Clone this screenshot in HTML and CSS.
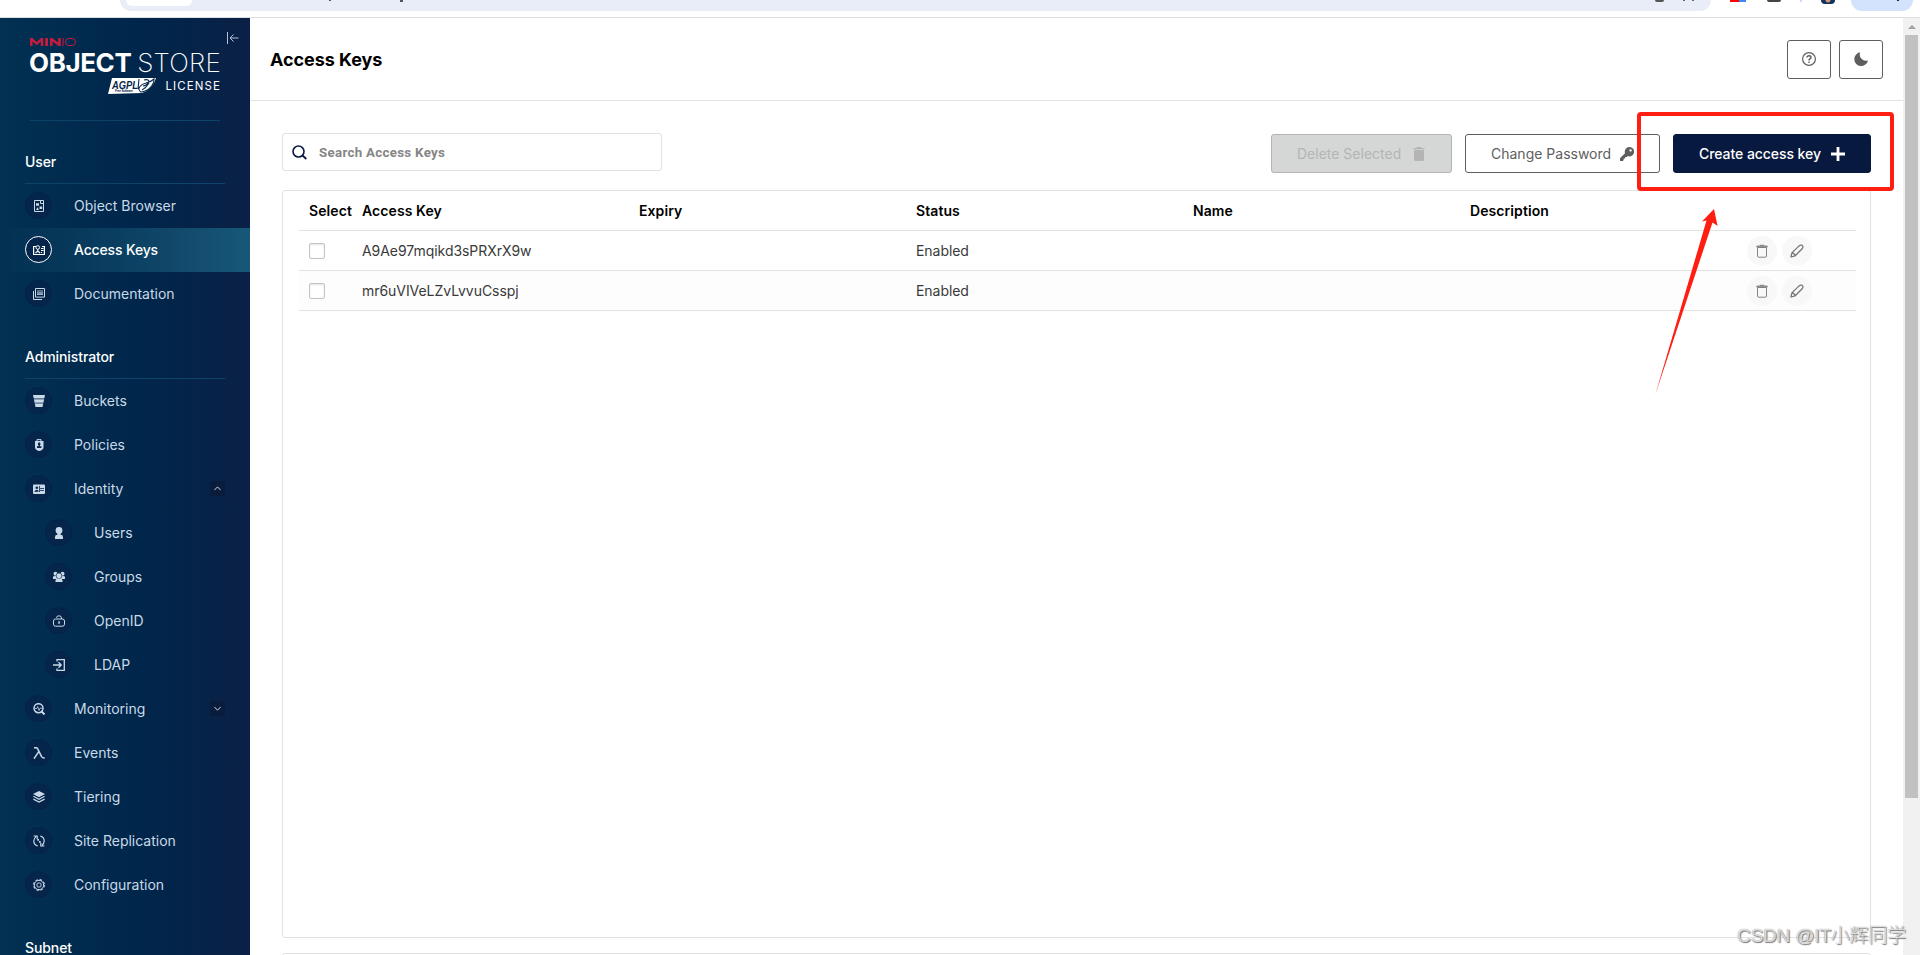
FILE: index.html
```html
<!DOCTYPE html>
<html lang="en">
<head>
    <meta charset="UTF-8">
    <meta name="viewport" content="width=device-width, initial-scale=1.0">
    <title>Access Keys</title>
    <link rel="stylesheet" href="styles.css">
</head>
<body>
    <!-- icons -->
    <svg class="defs" width="0" height="0">
        <symbol id="trash" viewBox="0 0 14 14"><path d="M2.500 3.500h9v8.600q0 1.100-1.100 1.100H3.600q-1.100 0-1.100-1.100zM1.500 2.800q0-.8.8-.8h9.400q.8 0 .8.8zM5 1.300h4" fill="none" stroke="currentColor" stroke-width=".9"/></symbol>
        <symbol id="pencil" viewBox="0 0 14 14"><path d="M1 13l.9-4.100 6.900-6.800q1.700-1.400 3.200-.9 1.600 1.200.4 3.300l-7.200 7.300zM1.900 8.900q2.500.2 3.300 2.900" fill="none" stroke="currentColor" stroke-width="1.300" stroke-linejoin="round"/></symbol>
    </svg>

    <div class="browser-bar">
        <div class="address">
            <div class="chip"></div>
            <i class="mark m1"></i><i class="mark m2"></i><i class="mark m3"></i><i class="mark m4"></i>
        </div>
        <div class="extensions">
            <i class="ext-red"></i><i class="ext-dark"></i><i class="ext-line"></i><i class="avatar"></i>
            <div class="update"><i></i></div>
        </div>
    </div>

    <div class="app">
        <aside class="sidebar">
            <div class="brand">
                <div class="logo">
                    <svg class="minio" width="46" height="8" viewBox="0 0 46 8"><path d="M0 8V0h2.500l4.200 4L11 0h2.300v8h-2.500V3.500L6.700 7.300 2.500 3.500V8zM15.200 0h2.800v8h-2.800zM20 8V0h2.200l6 4.600V0h2.600v8h-2.200l-6-4.600V8zM32.600 0h1v8h-1z" fill="#c51b3f"/><rect x="35.500" y=".5" width="10" height="7" rx="3.500" fill="none" stroke="#c51b3f"/></svg>
                    <div class="product"><b>OBJECT</b><span>STORE</span></div>
                    <div class="license">
                        <svg width="49" height="16" viewBox="0 0 49 16">
                            <path d="M4 0H48Q45 11 34 15L0 16z" fill="#fff"/>
                            <text class="agpl" x="4" y="10.500" textLength="26" lengthAdjust="spacingAndGlyphs">AGPL</text>
                            <text class="agpl-sub" x="7" y="14.300" textLength="18">Free Software</text>
                            <path d="M31 1L30 11M33 14C28 11 33 6 38 5 42 4 45 2 46 1 46 7 41 13 33 14zM34 12Q38 10 41 5M36 2Q40 1 41 3 39 8 35 8" fill="none" stroke="#05264a" stroke-width="1.100"/>
                        </svg>
                        <span>LICENSE</span>
                    </div>
                </div>
                <svg class="collapse" width="12" height="12" viewBox="0 0 12 12"><path d="M.5 0v12M11.500 6H3M6.500 2.500L3 6l3.500 3.500" fill="none" stroke="#b5c4d4"/></svg>
            </div>

            <h2>User</h2>
            <a class="item"><span class="dot"><svg viewBox="0 0 12 12"><path d="M1.500.5h9v11h-9zM7.500.5v3h3" fill="none" stroke="currentColor"/><path d="M3 3.200h3v2.500H3zM6.500 6.500h2.700v2.500H6.500zM3 10l1.500-2.700L6 10z" fill="currentColor"/></svg></span>Object Browser</a>
            <a class="item active"><span class="dot"><svg viewBox="0 0 12 12"><path d="M3 2.500H.6v8h10.800v-8H9" fill="none" stroke="currentColor" stroke-width="1.200"/><circle cx="4.800" cy="3.500" r="1.800" fill="none" stroke="currentColor"/><path d="M4.800 5.500v2M2.500 9l2.300-2L7 9M8 4.500h2.500M8 6.500h2.500M8 8.500h1" fill="none" stroke="currentColor" stroke-width="1.200"/></svg></span>Access Keys</a>
            <a class="item"><span class="dot"><svg viewBox="0 0 12 12"><path d="M2.500.5h9v8.600h-9zM.5 3v8.500H9" fill="none" stroke="currentColor"/><path d="M4 3h6M4 6.500h6" stroke="currentColor" stroke-width=".8"/><path d="M4 4h6v2H4z" fill="currentColor" opacity=".6"/></svg></span>Documentation</a>

            <h2>Administrator</h2>
            <a class="item"><span class="dot"><svg viewBox="0 0 12 12"><path d="M0 0h12l-.7 3.300H.7zM1.100 4.500h9.800l-.5 3H1.600zM1.900 8.800h8.200L9.500 12h-7z" fill="currentColor"/><path d="M.7 3.300h10.600l-1 6H1.700z" fill="currentColor" opacity=".4"/></svg></span>Buckets</a>
            <a class="item"><span class="dot"><svg viewBox="0 0 12 12"><path d="M4 2.500V.6h4v1.900" fill="none" stroke="currentColor"/><path d="M2 2h8.500v6q0 3-4.300 4Q2 11 2 8z" fill="currentColor"/><circle cx="6.200" cy="5" r="1.300" fill="#06254a"/><path d="M4 9V7.300h4.400V9zM5.500 3.500h1.400V8H5.500z" fill="#06254a"/></svg></span>Policies</a>
            <a class="item"><span class="dot"><svg viewBox="0 0 12 12"><rect y="1.500" width="12" height="9.500" rx="1" fill="currentColor"/><path d="M7 5.500h4M7 7.500h4M6.500 3v6M1.500 8.500h4" stroke="#06254a" stroke-width=".8"/><circle cx="3.800" cy="4.700" r="1.300" fill="#06254a"/><path d="M2 8q1.800-2.500 3.600 0z" fill="#06254a"/></svg></span>Identity<span class="toggle"><svg viewBox="0 0 7 5"><path d="M.3 4.200l3.200-3.300 3.200 3.300" fill="none" stroke="currentColor"/></svg></span></a>
            <a class="item sub"><span class="dot"><svg viewBox="0 0 12 12"><circle cx="6" cy="3.400" r="3.400" fill="currentColor"/><path d="M4.500 5h3v3h-3zM2 12v-2q0-2.300 2.300-2.300h3.400Q10 7.700 10 10v2z" fill="currentColor"/></svg></span>Users</a>
            <a class="item sub"><span class="dot"><svg viewBox="0 0 12 12"><g fill="currentColor"><circle cx="2.500" cy="2.800" r="2"/><circle cx="9.500" cy="2.800" r="2"/><path d="M0 8V6q0-1 2-1h8q2 0 2 1v2z"/><circle cx="6" cy="4.800" r="2.900" stroke="#06254a" stroke-width=".7"/><path d="M2.500 11V9.500q0-2 3.500-2t3.500 2V11z"/></g></svg></span>Groups</a>
            <a class="item sub"><span class="dot"><svg viewBox="0 0 12 12"><rect x=".5" y="4" width="11" height="7.200" rx="2" fill="none" stroke="currentColor"/><path d="M3.500 2.800Q3.600.8 6 .8t2.500 2V4" fill="none" stroke="currentColor"/><path d="M5.300 6.300h1.500v2.500H5.300z" fill="currentColor"/></svg></span>OpenID</a>
            <a class="item sub"><span class="dot"><svg viewBox="0 0 12 12"><path d="M4 2.500V.7h7.300v10.600H4V9.500M0 6h8M5.500 3.300L8.200 6 5.500 8.700" fill="none" stroke="currentColor" stroke-width="1.300"/></svg></span>LDAP</a>
            <a class="item"><span class="dot"><svg viewBox="0 0 12 12"><circle cx="5.500" cy="5.200" r="4.500" fill="none" stroke="currentColor" stroke-width="1.500"/><path d="M2 5.500h1.700l1-2 1.400 4 1-2.300H9" fill="none" stroke="currentColor" stroke-width=".8"/><path d="M8 8l3.500 3.500" stroke="currentColor" stroke-width="2"/></svg></span>Monitoring<span class="toggle"><svg viewBox="0 0 7 5"><path d="M.3.9l3.200 3.300L6.700.9" fill="none" stroke="currentColor"/></svg></span></a>
            <a class="item"><span class="dot"><svg viewBox="0 0 12 12"><path d="M1 .8h2.200q1 0 1.500 1l4 8q.7 1.500 3.100 1.300M5.600 4.800L1 11.700" fill="none" stroke="currentColor" stroke-width="1.500"/></svg></span>Events</a>
            <a class="item"><span class="dot"><svg viewBox="0 0 12 12"><path d="M6 0l6 3.100-6 3.100L0 3.100z" fill="currentColor"/><path d="M.4 5.300L6 8.200l5.600-2.900M.4 8.100L6 11l5.600-2.900" fill="none" stroke="currentColor" stroke-width="1.200"/></svg></span>Tiering</a>
            <a class="item"><span class="dot"><svg viewBox="0 0 12 12"><path d="M4.800 11Q.7 9.800.8 6 .9 3.400 3 1.600M.6 1h3.600v3.200M7.200 1Q11.300 2.200 11.200 6q-.1 2.600-2.200 4.400M11.400 11H7.800V7.800" fill="none" stroke="currentColor" stroke-width="1.200"/><path d="M4.300 4h1.700v1.700H4.300zM6 6h1.700v1.700H6z" fill="currentColor"/></svg></span>Site Replication</a>
            <a class="item"><span class="dot"><svg viewBox="0 0 12 12"><circle cx="6" cy="6" r="4.700" fill="none" stroke="currentColor"/><circle cx="6" cy="6" r="5.400" fill="none" stroke="currentColor" stroke-width="1.100" stroke-dasharray="2.400 1.840"/><rect x="4" y="4" width="4" height="4" rx="1" fill="none" stroke="currentColor" stroke-width=".9"/></svg></span>Configuration</a>

            <h2>Subnet</h2>
        </aside>

        <main>
            <header>
                <h1>Access Keys</h1>
                <div class="header-buttons">
                    <button><svg width="14" height="14" viewBox="0 0 14 14"><circle cx="7" cy="7" r="6.400" fill="none" stroke="currentColor" stroke-width="1.200"/><path d="M5 5.600Q5 3.700 7 3.700t2 1.700Q9 6.500 7.800 7 7 7.400 7 8.400M7 9.400v1.500" fill="none" stroke="currentColor" stroke-width="1.400"/></svg></button>
                    <button><svg width="14" height="14" viewBox="0 0 14 14"><path d="M6.200.3A6.900 6.900 0 1 0 14 8.400 6.200 6.200 0 0 1 6.200.3z" fill="currentColor"/></svg></button>
                </div>
            </header>

            <section class="content">
                <div class="toolbar">
                    <label class="search">
                        <svg width="15" height="15" viewBox="0 0 15 15"><circle cx="6.500" cy="6.500" r="5.500" fill="none" stroke="#0a1a3f" stroke-width="1.600"/><path d="M10.500 10.500l3.800 3.500" stroke="#0a1a3f" stroke-width="1.800"/></svg>
                        <input type="text" placeholder="Search Access Keys">
                    </label>
                    <div class="actions">
                        <button class="delete" disabled>Delete Selected <svg width="14" height="14" viewBox="0 0 14 14"><path d="M1.500 1h3l.5-1h4l.5 1h3v1.200h-11zM2 3h10v9.500q0 1.500-1.500 1.500h-7Q2 14 2 12.500z" fill="currentColor"/></svg></button>
                        <button class="password">Change Password <svg width="14" height="14" viewBox="0 0 14 14"><path d="M9.300 0a4.700 4.700 0 1 1-1.500 9.100L6.800 10H5.200v1.500H3.700V13l-.8 1H0v-2.800l5-5A4.700 4.700 0 0 1 9.300 0zm1.200 2.200a1.200 1.200 0 1 0 .1 0z" fill="currentColor" fill-rule="evenodd"/></svg></button>
                        <button class="create">Create access key <svg width="14" height="14" viewBox="0 0 14 14"><path d="M7 0v14M0 7h14" stroke="currentColor" stroke-width="2.800"/></svg></button>
                    </div>
                </div>

                <div class="table">
                    <div class="row head">
                        <span>Select</span><span>Access Key</span><span>Expiry</span><span>Status</span><span>Name</span><span>Description</span><span></span>
                    </div>
                    <div class="row">
                        <span><i class="check"></i></span><span>A9Ae97mqikd3sPRXrX9w</span><span></span><span>Enabled</span><span></span><span></span>
                        <span class="row-actions"><a><svg><use href="#trash"/></svg></a><a><svg><use href="#pencil"/></svg></a></span>
                    </div>
                    <div class="row even">
                        <span><i class="check"></i></span><span>mr6uVIVeLZvLvvuCsspj</span><span></span><span>Enabled</span><span></span><span></span>
                        <span class="row-actions"><a><svg><use href="#trash"/></svg></a><a><svg><use href="#pencil"/></svg></a></span>
                    </div>
                </div>
                <div class="help-box"></div>
            </section>
        </main>

        <div class="scrollbar"><i class="up"></i><i class="thumb"></i></div>
    </div>

    <!-- annotation over the page -->
    <div class="highlight"></div>
    <svg class="arrow" width="70" height="190" viewBox="0 0 70 190"><path d="M64 0L67.600 17 62.500 13.500 5.200 186 56.500 11.500 52 12.500z" fill="#ff1f12"/></svg>
    <div class="watermark">CSDN @IT小辉同学</div>
</body>
</html>
```
FILE: styles.css
```css
* { box-sizing: border-box; }
body { margin: 0; height: 955px; overflow: hidden; position: relative; font-family: Inter, "Noto Sans CJK SC", sans-serif; font-size: 14px; color: #000; background: #fff; }
svg { display: block; flex: none; }
.defs { position: absolute; }
h1, h2 { margin: 0; }
button { font: inherit; }

/* browser strip */
.browser-bar { height: 18px; border-bottom: 1px solid #dedfe1; display: flex; align-items: flex-start; padding-left: 120px; overflow: hidden; }
.address { width: 1591px; height: 11px; background: #e9edf7; border-radius: 0 0 17px 17px; display: flex; align-items: flex-start; padding-left: 6px; }
.chip { width: 66px; height: 6px; background: #fff; border-radius: 0 0 12px 12px; }
.mark { height: 1px; background: #555; width: 2px; }
.m1 { margin-left: 137px; }
.m2 { margin-left: 69px; width: 3px; height: 2px; }
.m3 { margin-left: 1252px; width: 9px; height: 2px; border-radius: 0 0 2px 2px; }
.m4 { margin-left: 19px; width: 11px; height: 1px; background: none; border-left: 2px solid #666; border-right: 2px solid #666; }
.extensions { display: flex; align-items: flex-start; margin-left: 19px; }
.ext-red { width: 16px; height: 2px; background: linear-gradient(90deg, #f00 9px, #4285f4 9px); }
.ext-dark { width: 14px; height: 2px; background: #444; margin-left: 21px; border-radius: 0 0 2px 2px; }
.ext-line { width: 2px; height: 2px; background: #c9dafb; margin-left: 19px; }
.avatar { width: 14px; height: 4px; background: radial-gradient(circle at 50% 0, #c99b7c 2px, #16305c 3px); border-radius: 0 0 7px 7px; margin-left: 19px; }
.update { width: 62px; height: 11px; background: #d3e3fd; border-radius: 0 0 17px 17px; margin-left: 16px; padding-left: 46px; }
.update i { display: block; width: 2px; height: 1px; background: #223; }

.app { display: flex; height: 937px; }

/* sidebar */
.sidebar { width: 250px; flex: none; overflow: hidden; background: linear-gradient(90deg, #023152 0%, #00264b 55%, #0b2046 100%); color: #c9d9e8; }
.brand { height: 103px; display: flex; justify-content: space-between; padding: 14px 11px 0 30px; }
.logo { width: 190px; height: 89px; border-bottom: 1px solid #0e4369; padding-top: 6px; color: #fff; }
.product { display: flex; justify-content: space-between; align-items: center; height: 18px; margin: 8px -1px 0; font-size: 26px; line-height: 18px; }
.product b { font-weight: 700; letter-spacing: -0.4px; }
.product span { font-weight: 200; letter-spacing: 0.2px; }
.license { display: flex; justify-content: flex-end; align-items: center; margin-top: 6px; gap: 8px; font-size: 11.5px; line-height: 16px; letter-spacing: 1.1px; }
.license span { margin-right: -1px; }
.agpl { font: italic 700 11px "Liberation Sans", sans-serif; fill: #05264a; letter-spacing: 0; }
.agpl-sub { font: 700 3px "Liberation Sans", sans-serif; fill: #05264a; letter-spacing: 0; }
.sidebar h2 { height: 63px; margin: 0 25px; padding-top: 32px; border-bottom: 1px solid #0e4369; font-size: 14px; line-height: 18px; font-weight: 500; letter-spacing: -0.1px; color: #fff; }
.item { display: flex; align-items: center; height: 44px; padding: 0 25px 1px; }
.item.sub { padding-left: 45px; }
.item.active { color: #fff; font-weight: 500; letter-spacing: -0.15px; background: linear-gradient(90deg, rgba(24, 94, 126, 0) 0%, rgba(24, 94, 126, 0.9) 100%); }
.dot { width: 27px; height: 27px; flex: none; margin-right: 22px; border: 1px solid #04224a; border-radius: 50%; background: #06254a; display: flex; align-items: center; justify-content: center; padding-left: 1px; }
.dot svg { width: 12px; height: 12px; }
.active .dot { border-color: #fff; }
.toggle { width: 15px; height: 15px; margin-left: auto; background: #0a1c3c; border-radius: 2px; display: flex; align-items: center; justify-content: center; }
.toggle svg { width: 7px; height: 5px; }

/* page */
main { flex: 1; min-width: 0; display: flex; flex-direction: column; }
header { height: 83px; flex: none; border-bottom: 1px solid #e3e3e3; display: flex; justify-content: space-between; align-items: center; padding: 0 20px; }
h1 { font-size: 18px; font-weight: 700; letter-spacing: -0.05px; }
.header-buttons { display: flex; gap: 8px; }
.header-buttons button { width: 44px; height: 39px; padding: 0; background: #fff; border: 1px solid #5e5e5e; border-radius: 3px; color: #5e5e5e; display: flex; align-items: center; justify-content: center; }
.content { padding: 32px 32px 0; }
.toolbar { display: flex; justify-content: space-between; height: 57px; }
.search { width: 380px; height: 38px; border: 1px solid #e2e2e2; border-radius: 3px; display: flex; align-items: center; padding-left: 9px; gap: 12px; }
.search input { flex: 1; border: 0; outline: 0; padding: 0; font: 700 13.3px Roboto, sans-serif; letter-spacing: 0.3px; }
.search input::placeholder { color: #858585; opacity: 1; }
.actions { display: flex; gap: 13px; padding-top: 1px; }
.actions button { height: 39px; border: 1px solid #5e5e5e; border-radius: 3px; padding: 0 25px; display: flex; align-items: center; justify-content: space-between; background: #fff; color: #5e5e5e; }
.actions .delete { width: 181px; background: #d5d7d7; border-color: #b4b4b4; color: #b4b4b4; }
.actions .password { width: 195px; }
.actions .create { width: 198px; background: #07193e; border-color: #07193e; color: #fff; font-weight: 500; letter-spacing: -0.06px; }

.table { height: 748px; border: 1px solid #e2e2e2; border-radius: 3px; padding: 0 14px 0 16px; }
.row { display: grid; grid-template-columns: 53px repeat(5, 277px) 1fr; align-items: center; height: 40px; padding-left: 10px; border-bottom: 1px solid #e2e2e2; color: #393939; letter-spacing: -0.05px; }
.row.head { font-weight: 600; letter-spacing: 0.08px; color: #000; }
.row.even { background: #fdfdfd; }
.check { display: block; width: 16px; height: 16px; border: 1px solid #c3c3c3; border-radius: 2px; background: #fff; box-shadow: inset 0 1px 2px #e6e6e6; }
.row-actions { display: flex; gap: 5px; }
.row-actions a { width: 30px; height: 30px; border-radius: 50%; background: #f8f8f8; color: #777; display: flex; align-items: center; justify-content: center; }
.row-actions svg { width: 14px; height: 14px; }
.help-box { height: 40px; margin-top: 15px; border: 1px solid #e2e2e2; border-radius: 3px; }

.scrollbar { width: 17px; background: #f1f1f1; padding: 7px 2px; display: flex; flex-direction: column; align-items: center; }
.up { border: 4px solid transparent; border-top: 0; border-bottom-color: #a3a3a3; margin: 0 0 6px; }
.thumb { width: 13px; height: 763px; background: #c1c1c1; }

.highlight { position: absolute; left: 1637px; top: 112px; width: 257px; height: 79px; border: 4px solid #ff1f12; border-radius: 4px; }
.arrow { position: absolute; left: 1650px; top: 209px; }
.watermark { position: absolute; right: 14px; top: 922px; font: 300 19px/28px "Liberation Sans", "Noto Sans CJK SC", sans-serif; letter-spacing: -0.2px; color: rgba(255, 255, 255, 0.7); text-shadow: 1px 1px 1px #777, 0 0 1px #888; white-space: nowrap; }
```
